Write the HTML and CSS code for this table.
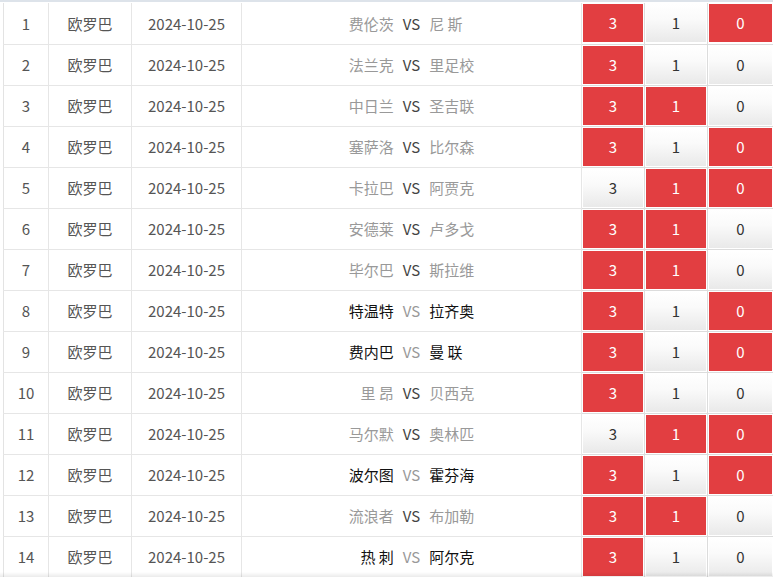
FILE: index.html
```html
<!DOCTYPE html>
<html lang="zh">

<head>
  <meta charset="UTF-8">
  <meta name="viewport" content="width=device-width, initial-scale=1.0">
  <title>赛程</title>
  <link rel="stylesheet" href="styles.css">
</head>

<body>
  <div class="match-box">
    <table class="match-table">
      <colgroup>
        <col class="c-no">
        <col class="c-league">
        <col class="c-date">
        <col class="c-teams">
        <col class="c-score">
        <col class="c-score">
        <col class="c-score-last">
      </colgroup>
      <tbody id="matchRows"></tbody>
    </table>
  </div>
  <div class="bottom-fade"></div>

  <script>
    // 比赛数据: 主队, 客队, 是否高亮, 胜平负是否选中
    const matches = [
      ['费伦茨', '尼 斯', false, [1, 0, 1]],
      ['法兰克', '里足校', false, [1, 0, 0]],
      ['中日兰', '圣吉联', false, [1, 1, 0]],
      ['塞萨洛', '比尔森', false, [1, 0, 1]],
      ['卡拉巴', '阿贾克', false, [0, 1, 1]],
      ['安德莱', '卢多戈', false, [1, 1, 0]],
      ['毕尔巴', '斯拉维', false, [1, 1, 0]],
      ['特温特', '拉齐奥', true, [1, 0, 1]],
      ['费内巴', '曼 联', true, [1, 0, 1]],
      ['里 昂', '贝西克', false, [1, 0, 0]],
      ['马尔默', '奥林匹', false, [0, 1, 1]],
      ['波尔图', '霍芬海', true, [1, 0, 1]],
      ['流浪者', '布加勒', false, [1, 1, 0]],
      ['热 刺', '阿尔克', true, [1, 0, 0]]
    ];
    const labels = ['3', '1', '0'];

    const tbody = document.getElementById('matchRows');
    matches.forEach((m, i) => {
      const tr = document.createElement('tr');
      let html = '<td>' + (i + 1) + '</td>' +
        '<td>欧罗巴</td>' +
        '<td>2024-10-25</td>' +
        '<td><div class="teams' + (m[2] ? ' teams-on' : '') + '">' +
        '<span class="home">' + m[0] + '</span>' +
        '<span class="vs">VS</span>' +
        '<span class="away">' + m[1] + '</span></div></td>';
      m[3].forEach((sel, j) => {
        html += '<td class="score-td"><div class="score' + (sel ? ' picked' : '') + '">' + labels[j] + '</div></td>';
      });
      tr.innerHTML = html;
      tbody.appendChild(tr);
    });
  </script>
</body>

</html>
```

FILE: styles.css
```css
* {
  margin: 0;
  padding: 0;
  box-sizing: border-box;
}

body {
  font-family: 'Noto Sans CJK SC', 'Microsoft YaHei', sans-serif;
  font-size: 15px;
  color: #555;
  background: #fff;
  overflow: hidden;
}

.match-box {
  border-top: 2px solid #dde3ea;
  padding: 1px 0 0 3px;
}

.match-table {
  width: 770px;
  table-layout: fixed;
  border-collapse: collapse;
  border-left: 1px solid #e3e3e3;
}

.c-no { width: 45px; }
.c-league { width: 83px; }
.c-date { width: 110px; }
.c-teams { width: 340px; }
.c-score { width: 63px; }
.c-score-last { width: 66px; }

.match-table td {
  height: 41px;
  border-right: 1px solid #e6e6e6;
  border-bottom: 1px solid #e6e6e6;
  text-align: center;
  vertical-align: middle;
  white-space: nowrap;
}

/* 对阵 */
.teams {
  display: grid;
  grid-template-columns: 1fr auto 1fr;
  gap: 9px;
  color: #999;
}

.teams .home {
  text-align: right;
}

.teams .away {
  text-align: left;
}

.teams .vs {
  color: #444;
}

.teams-on {
  color: #111;
}

.teams-on .vs {
  color: #999;
}

/* 胜平负 */
.match-table td.score-td {
  padding: 1px;
  border-right-color: #dcdcdc;
  border-bottom-color: #dcdcdc;
}

.score {
  height: 38px;
  line-height: 38px;
  color: #333;
  background: linear-gradient(to bottom, #ffffff 0%, #fafafa 40%, #e9e9e9 100%);
}

.score.picked {
  color: #fff;
  background: #e23e41;
}

.bottom-fade {
  position: fixed;
  left: 0;
  right: 0;
  bottom: 0;
  height: 5px;
  background: linear-gradient(to bottom, rgba(0, 0, 0, 0), rgba(0, 0, 0, 0.08));
  pointer-events: none;
}
```
